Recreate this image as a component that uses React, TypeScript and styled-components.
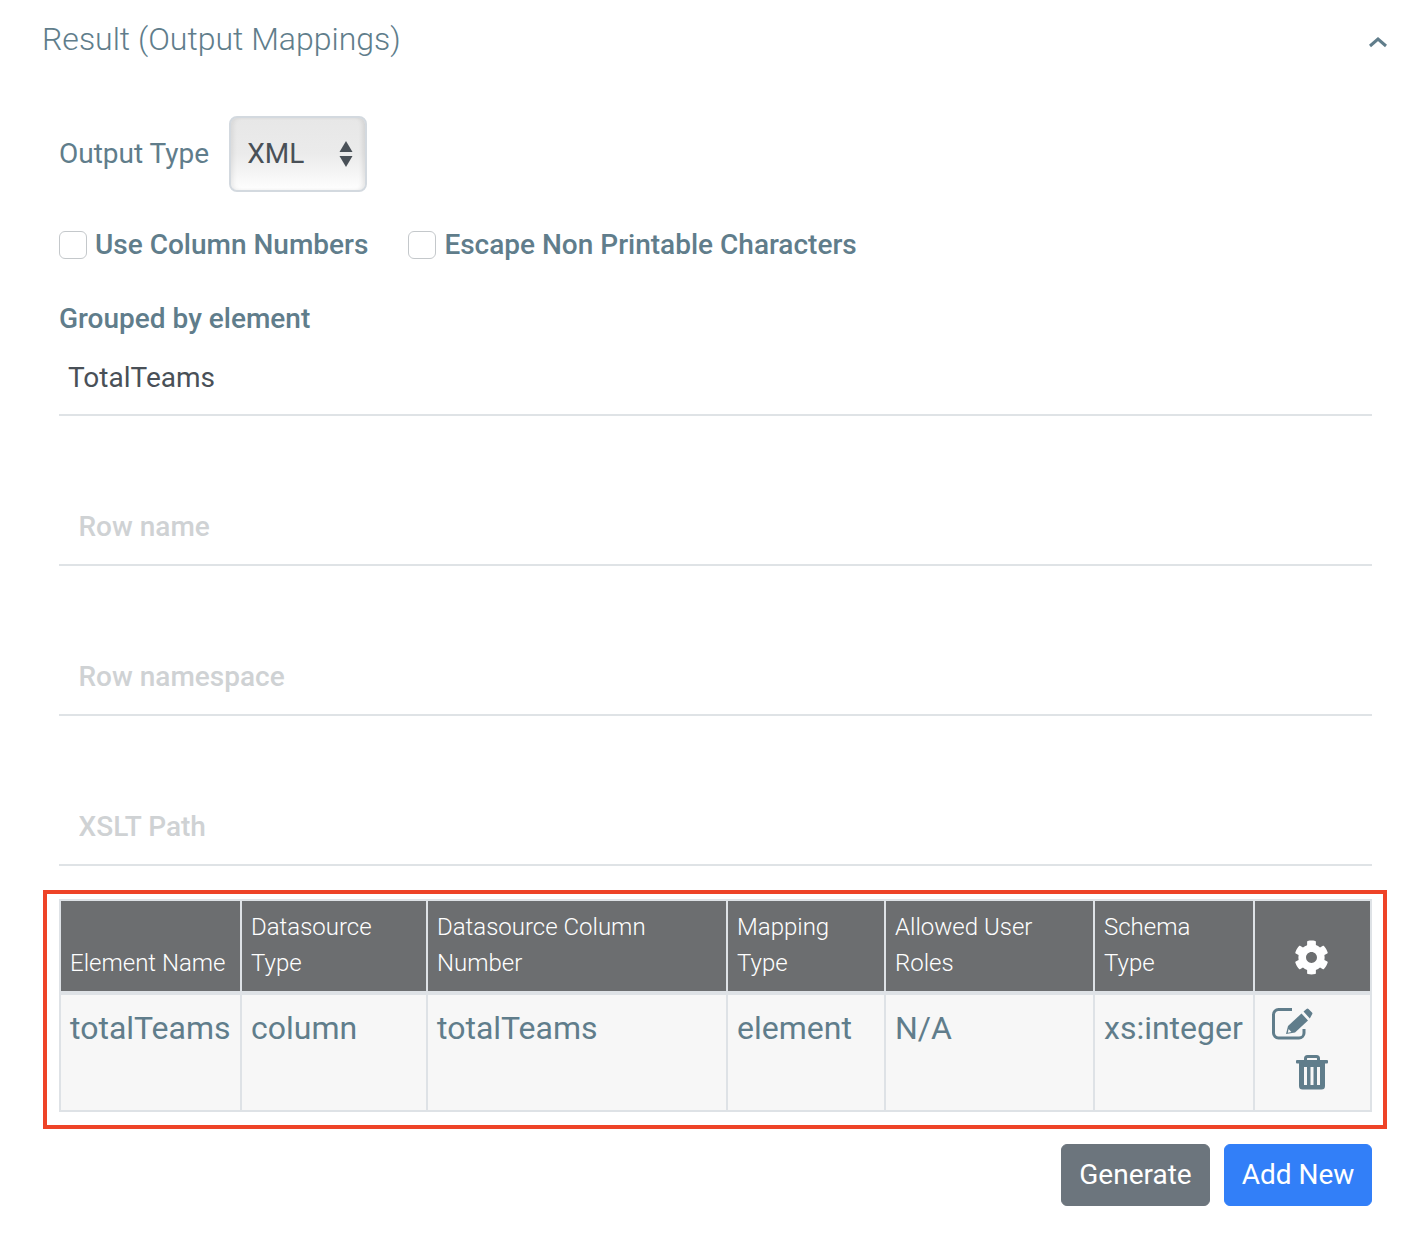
import React from "react";
import styled, { createGlobalStyle } from "styled-components";
import { FaCog } from "react-icons/fa";

const Global = createGlobalStyle`
  html, body { margin: 0; padding: 0; background: #fff; }
  body { font-family: Roboto, "Liberation Sans", sans-serif; color: #607d8b; }
  * { box-sizing: border-box; }
`;

const Page = styled.div`
  width: 1408px;
  height: 1242px;
  padding: 16px 20px 0 43px;
  overflow: hidden;
`;

const Header = styled.div`
  display: flex;
  justify-content: space-between;
  align-items: center;
  height: 46px;
`;

const Title = styled.h2`
  margin: 0 0 0 -1px;
  font-size: 32px;
  line-height: 46px;
  font-weight: 300;
  color: #607d8b;
`;

const Chevron = styled.svg`
  width: 20px;
  height: 12px;
  margin: 6px 0 0 0;
  fill: none;
  stroke: #607d8b;
  stroke-width: 3;
`;

const Body = styled.div`
  padding: 54px 0 0 16px;
`;

const TypeRow = styled.div`
  display: flex;
  align-items: center;
  gap: 20px;
  height: 76px;
`;

const FieldLabel = styled.label`
  padding-bottom: 2px;
  font-size: 28px;
  color: #607d8b;
`;

const SelectBox = styled.div`
  position: relative;
  width: 138px;
  height: 76px;
`;

const Select = styled.select`
  appearance: none;
  width: 100%;
  height: 100%;
  padding: 0 0 2px 16px;
  border: 2px solid #d3d9df;
  border-radius: 8px;
  font: 400 28px Roboto, sans-serif;
  color: #495057;
  background: linear-gradient(to bottom, #e7e7e7 0%, #ebebeb 50%, #fefefe 100%);
  box-shadow: inset 4px 0 5px -2px rgba(0, 0, 0, 0.08), inset -4px 0 5px -2px rgba(0, 0, 0, 0.1);
`;

const SelectArrows = styled.svg`
  position: absolute;
  top: 24px;
  right: 14px;
  width: 14px;
  height: 28px;
  fill: #495057;
  pointer-events: none;
`;

const CheckRow = styled.div`
  display: flex;
  align-items: center;
  gap: 40px;
  margin-top: 36px;
  height: 34px;
`;

const CheckLabel = styled.label`
  display: flex;
  align-items: center;
  gap: 8px;
  font-size: 28px;
  line-height: 32px;
  font-weight: 500;
  color: #607d8b;
  span { padding-bottom: 1px; }
`;

const CheckBox = styled.input`
  appearance: none;
  width: 28px;
  height: 28px;
  margin: 0;
  border: 1px solid #c4c8cb;
  border-radius: 6px;
  background: #fff;
`;

const GroupLabel = styled.div`
  margin-top: 40px;
  height: 34px;
  font-size: 28px;
  line-height: 34px;
  font-weight: 500;
  color: #607d8b;
`;

const TextField = styled.input<{ $gap: number; $pad: number; $pb: number }>`
  display: block;
  width: 1313px;
  height: 64px;
  margin-top: ${(p) => p.$gap}px;
  padding: 0 0 ${(p) => p.$pb}px ${(p) => p.$pad}px;
  border: 0;
  border-bottom: 2px solid #dfe3e6;
  outline: 0;
  font: 400 28px Roboto, sans-serif;
  color: #495057;
  background: transparent;
  &::placeholder {
    color: #cfd2d4;
    font-weight: 500;
    opacity: 1;
  }
`;

const Highlight = styled.div`
  width: 1344px;
  height: 239px;
  margin: 24px 0 0 -16px;
  padding: 5px 12px 0 12px;
  border: 4px solid #ee4327;
`;

const Table = styled.table`
  width: 1313px;
  table-layout: fixed;
  border-collapse: collapse;
  border: 2px solid #dee2e6;
`;

const Th = styled.th<{ $w?: number }>`
  width: ${(p) => (p.$w ? `${p.$w}px` : "auto")};
  height: 91px;
  padding: 8px 9px 10px;
  border: 2px solid #dee2e6;
  border-bottom-width: 4px;
  background: #6c6e70;
  color: #fff;
  font-size: 24px;
  font-weight: 300;
  line-height: 36px;
  text-align: left;
  vertical-align: bottom;
`;

const IconTh = styled(Th)`
  padding: 0 2px 16px 0;
  text-align: center;
  line-height: 36px;
  svg { display: block; margin: 0 auto; }
`;

const Td = styled.td`
  height: 118px;
  padding: 13px 9px 0;
  border: 2px solid #dee2e6;
  background: #f7f7f7;
  color: #607d8b;
  font-size: 32px;
  font-weight: 400;
  line-height: 40px;
  vertical-align: top;
  white-space: nowrap;
`;

const ActionTd = styled(Td)`
  padding: 12px 0 0 16px;
`;

const Actions = styled.div`
  display: flex;
  flex-direction: column;
  gap: 13px;
  svg { display: block; }
`;

const TrashSlot = styled.div`
  padding-left: 25px;
`;

const Buttons = styled.div`
  display: flex;
  justify-content: flex-end;
  gap: 14px;
  width: 1313px;
  margin-top: 15px;
`;

const Button = styled.button<{ $bg: string; $w: number }>`
  width: ${(p) => p.$w}px;
  height: 62px;
  padding: 0 0 2px;
  border: 1px solid ${(p) => p.$bg};
  border-radius: 6px;
  background: ${(p) => p.$bg};
  color: #fff;
  font: 400 28px Roboto, sans-serif;
`;

const columns: { label: React.ReactNode; w: number }[] = [
  { label: "Element Name", w: 181 },
  { label: <>Datasource<br />Type</>, w: 186 },
  { label: <>Datasource Column<br />Number</>, w: 300 },
  { label: <>Mapping<br />Type</>, w: 158 },
  { label: <>Allowed User<br />Roles</>, w: 209 },
  { label: <>Schema<br />Type</>, w: 160 },
];

const cells = ["totalTeams", "column", "totalTeams", "element", "N/A", "xs:integer"];

const EditIcon = () => (
  <svg width="42" height="34" viewBox="0 0 42 34">
    <path
      d="M21 2.5H7.5a5 5 0 0 0-5 5V26a5 5 0 0 0 5 5H28a5 5 0 0 0 5-5v-4"
      fill="none"
      stroke="#607d8b"
      strokeWidth="3"
    />
    <path d="M15 27l2-8L30.5 6.5 37 13.5 24 25.5z" fill="#607d8b" />
    <path d="M32.5 4.5L35.5 2a1.5 1.5 0 0 1 2 0l3.5 3.5a1.5 1.5 0 0 1 0 2L38.8 11.5z" fill="#607d8b" />
    <path d="M17.6 22l2.8 3-3.6.8z" fill="#f7f7f7" />
  </svg>
);

const TrashIcon = () => (
  <svg width="32" height="36" viewBox="0 0 32 36">
    <path d="M9.5 7V4.5a2 2 0 0 1 2-2h9a2 2 0 0 1 2 2V7" fill="none" stroke="#607d8b" strokeWidth="3" />
    <rect x="0" y="6" width="32" height="3.5" rx="1" fill="#607d8b" />
    <path d="M3 9h26v23a3.5 3.5 0 0 1-3.5 3.5h-19A3.5 3.5 0 0 1 3 32z" fill="#607d8b" />
    <rect x="8" y="13" width="3" height="18" fill="#f7f7f7" />
    <rect x="14.5" y="13" width="3" height="18" fill="#f7f7f7" />
    <rect x="21" y="13" width="3" height="18" fill="#f7f7f7" />
  </svg>
);

export default function App() {
  return (
    <Page>
      <Global />
      <Header>
        <Title>Result (Output Mappings)</Title>
        <Chevron viewBox="0 0 20 12">
          <polyline points="2,10 10,3 18,10" />
        </Chevron>
      </Header>
      <Body>
        <TypeRow>
          <FieldLabel>Output Type</FieldLabel>
          <SelectBox>
            <Select defaultValue="XML">
              <option>XML</option>
              <option>JSON</option>
            </Select>
            <SelectArrows viewBox="0 0 14 28">
              <polygon points="7,1 13.5,12 0.5,12" />
              <polygon points="0.5,16 13.5,16 7,27" />
            </SelectArrows>
          </SelectBox>
        </TypeRow>
        <CheckRow>
          <CheckLabel><CheckBox type="checkbox" /><span>Use Column Numbers</span></CheckLabel>
          <CheckLabel><CheckBox type="checkbox" /><span>Escape Non Printable Characters</span></CheckLabel>
        </CheckRow>
        <GroupLabel>Grouped by element</GroupLabel>
        <TextField $gap={16} $pad={9} $pb={12} defaultValue="TotalTeams" />
        <TextField $gap={86} $pad={19.5} $pb={14} placeholder="Row name" />
        <TextField $gap={86} $pad={19.5} $pb={14} placeholder="Row namespace" />
        <TextField $gap={86} $pad={19.5} $pb={14} placeholder="XSLT Path" />
        <Highlight>
          <Table>
            <thead>
              <tr>
                {columns.map((c, i) => (
                  <Th key={i} $w={c.w}>{c.label}</Th>
                ))}
                <IconTh><FaCog size={35} /></IconTh>
              </tr>
            </thead>
            <tbody>
              <tr>
                {cells.map((c, i) => (
                  <Td key={i}>{c}</Td>
                ))}
                <ActionTd>
                  <Actions>
                    <EditIcon />
                    <TrashSlot><TrashIcon /></TrashSlot>
                  </Actions>
                </ActionTd>
              </tr>
            </tbody>
          </Table>
        </Highlight>
        <Buttons>
          <Button $bg="#6c757d" $w={149}>Generate</Button>
          <Button $bg="#327ff8" $w={148}>Add New</Button>
        </Buttons>
      </Body>
    </Page>
  );
}
